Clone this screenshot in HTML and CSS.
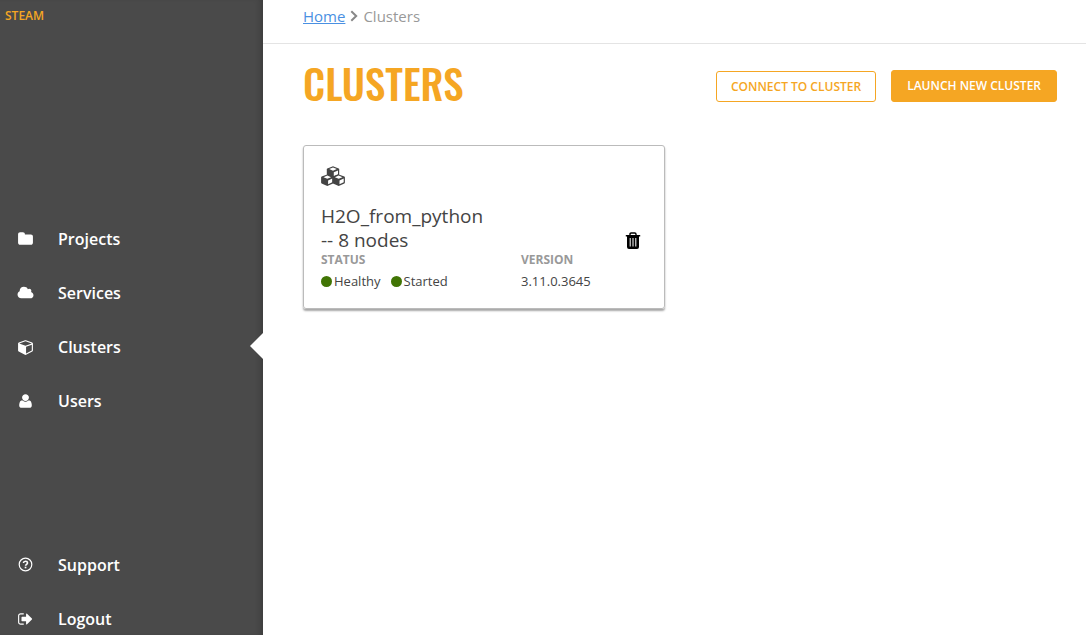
FILE: index.html
```html
<!DOCTYPE html>
<html lang="en">
<head>
<meta charset="utf-8">
<meta name="viewport" content="width=device-width, initial-scale=1">
<title>Steam - Clusters</title>
<link rel="stylesheet" href="styles.css">
</head>
<body>
<div class="app">
  <aside class="sidebar">
    <a class="brand" href="#">STEAM</a>
    <nav class="menu menu-main" aria-label="Main">
      <a class="menu-item" href="#"><svg class="menu-icon" viewBox="0 0 1792 1792"><path d="M1728 608v704q0 92-66 158t-158 66h-1216q-92 0-158-66t-66-158v-960q0-92 66-158t158-66h320q92 0 158 66t66 158v32h672q92 0 158 66t66 158z"/></svg>Projects</a>
      <a class="menu-item" href="#"><svg class="menu-icon" viewBox="0 0 2048 1792"><path d="M1984 1152q0 159-112.500 271.500t-271.500 112.500h-1088q-185 0-316.500-131.500t-131.500-316.500q0-132 71-241.500t187-163.500q-2-28-2-43 0-212 150-362t362-150q158 0 286.500 88t187.500 230q70-62 166-62 106 0 181 75t75 181q0 75-41 138 129 30 213 134.500t84 239.500z"/></svg>Services</a>
      <a class="menu-item active" href="#" aria-current="page"><svg class="menu-icon" viewBox="-64 0 1792 1792"><path d="M896 1629l640-349v-636l-640 233v752zm-64-865l698-254-698-254-698 254zm832-252v768q0 35-18 65t-49 47l-704 384q-28 16-61 16t-61-16l-704-384q-31-17-49-47t-18-65v-768q0-40 23-73t61-47l704-256q22-8 44-8t44 8l704 256q38 14 61 47t23 73z"/></svg>Clusters</a>
      <a class="menu-item" href="#"><svg class="menu-icon" viewBox="0 0 1792 1792"><path d="M1600 1405q0 120-73 189.500t-194 69.500h-874q-121 0-194-69.500t-73-189.500q0-53 3.500-103.500t14-109 26.500-108.500 43-97.500 62-81 85.500-53.500 111.500-20q9 0 42 21.500t74.500 48 108 48 133.500 21.500 133.500-21.500 108-48 74.500-48 42-21.500q61 0 111.500 20t85.500 53.500 62 81 43 97.500 26.500 108.500 14 109 3.500 103.500zm-320-893q0 159-112.500 271.500t-271.500 112.500-271.500-112.500-112.500-271.500 112.500-271.500 271.500-112.500 271.500 112.500 112.500 271.500z"/></svg>Users</a>
    </nav>
    <nav class="menu menu-account" aria-label="Account">
      <a class="menu-item" href="#"><svg class="menu-icon" viewBox="0 0 16 16"><circle cx="8" cy="7.500" r="6.300" fill="none" stroke="currentColor" stroke-width="1.200"/><path d="M5.900 6C6.100 3.800 9.900 3.700 10 5.900C10 7.200 8.100 7.400 8.100 8.800" fill="none" stroke="currentColor" stroke-width="1.600"/><path d="M7.200 9.700h1.700v1.600H7.200z"/></svg>Support</a>
      <a class="menu-item" href="#"><svg class="menu-icon" viewBox="0 0 1792 1792"><path d="M704 1440q0 4 1 20t.5 26.500-3 23.500-10 19.500-20.500 6.500h-320q-119 0-203.500-84.500t-84.500-203.500v-704q0-119 84.500-203.500t203.500-84.500h320q13 0 22.500 9.500t9.500 22.500q0 4 1 20t.5 26.500-3 23.500-10 19.500-20.500 6.500h-320q-66 0-113 47t-47 113v704q0 66 47 113t113 47h312l11.500 1 11.500 3 8 5.500 7 9 2 13.500zm928-544q0 26-19 45l-544 544q-19 19-45 19t-45-19-19-45v-288h-448q-26 0-45-19t-19-45v-384q0-26 19-45t45-19h448v-288q0-26 19-45t45-19 45 19l544 544q19 19 19 45z"/></svg>Logout</a>
    </nav>
  </aside>
  <main class="content">
    <nav class="breadcrumbs" aria-label="Breadcrumb">
      <a class="crumb-link" href="#">Home</a>
      <svg class="crumb-arrow" viewBox="0 0 8 12"><path d="M1.300 1.200L6.200 6l-4.900 4.800"/></svg>
      <span>Clusters</span>
    </nav>
    <header class="page-header">
      <h1 class="page-title">CLUSTERS</h1>
      <div class="actions">
        <button class="button button-outline" type="button">CONNECT TO CLUSTER</button>
        <button class="button button-solid" type="button">LAUNCH NEW CLUSTER</button>
      </div>
    </header>
    <article class="card">
      <svg class="cubes" viewBox="0 0 24 20">
        <defs>
          <g id="cube"><path class="cube-body" d="M6.300 .3L12 2.500Q12.500 2.800 12.500 3.400V8.400Q12.500 9 12 9.300L6.300 11.800L.6 9.300Q.1 9 .1 8.400V3.400Q.1 2.800 .6 2.500z"/><path class="cube-face" d="M6.300 1.500L10.100 3.100L6.300 4.700L2.500 3.100zM7.100 6.300L11.300 4.500V8.200L7.100 10.100z"/></g>
        </defs>
        <use href="#cube" x="5.700" y="0"/><use href="#cube" x="0" y="8.100"/><use href="#cube" x="11.400" y="8.100"/>
      </svg>
      <div class="card-main">
        <h2 class="cluster-name">H2O_from_python<br>-- 8 nodes</h2>
        <button class="delete" type="button" aria-label="Delete cluster"><svg class="trash" viewBox="0 0 16 18"><path d="M5 3V2.200Q5 1 6.200 1H9.800Q11 1 11 2.200V3" fill="none" stroke="currentColor" stroke-width="1.400"/><path d="M.8 3H15.200V4.500H14V15Q14 17 12 17H4Q2 17 2 15V4.500H.8z"/><path d="M5.200 6v8.500M8 6v8.500M10.800 6v8.500" stroke="#fff" stroke-width="1"/></svg></button>
      </div>
      <dl class="facts">
        <div><dt>STATUS</dt><dd class="statuses"><span class="status">Healthy</span><span class="status">Started</span></dd></div>
        <div><dt>VERSION</dt><dd>3.11.0.3645</dd></div>
      </dl>
    </article>
  </main>
</div>
</body>
</html>
```
FILE: styles.css
```css
* { box-sizing: border-box; }
body {
  margin: 0;
  background: #fff;
  color: #444;
  font-family: "Open Sans", sans-serif;
}
.app { display: flex; min-height: 100vh; }
.sidebar {
  display: flex;
  flex-direction: column;
  flex: 0 0 263px;
  padding-bottom: 5px;
  background: #4a4a4a;
  box-shadow: inset -6px 0 6px -4px rgba(0, 0, 0, 0.2);
}
.brand {
  padding: 8px 5px;
  color: #f5a623;
  font-size: 12px;
  font-weight: 600;
  line-height: 16px;
  text-decoration: none;
}
.menu { display: flex; flex-direction: column; gap: 32px; }
.menu-main { margin-top: 196px; }
.menu-account { margin-top: auto; }
.menu-item {
  position: relative;
  display: flex;
  align-items: center;
  gap: 24px;
  padding-left: 17px;
  color: #fff;
  font-size: 16px;
  font-weight: 600;
  line-height: 22px;
  text-decoration: none;
}
.menu-icon { width: 17px; height: 16px; fill: currentColor; }
.active::after {
  content: "";
  position: absolute;
  top: -3px;
  right: 0;
  border: 13px solid transparent;
  border-left: 0;
  border-right-color: #fff;
}
.content { flex: 1; min-width: 0; }
.breadcrumbs {
  display: flex;
  align-items: center;
  gap: 5px;
  padding: 5px 40px 16px;
  border-bottom: 1px solid #e4e4e4;
  color: #999;
  font-size: 15px;
  line-height: 22px;
}
.crumb-link { color: #4a90e2; }
.crumb-arrow { width: 8px; height: 12px; fill: none; stroke: #888; stroke-width: 2; }
.page-header {
  display: flex;
  align-items: center;
  justify-content: space-between;
  padding: 7px 29px 30px 40px;
}
.page-title {
  margin: 0;
  color: #f5a623;
  font-family: Oswald, "Roboto Condensed", "Liberation Sans Narrow", sans-serif;
  font-size: 41px;
  font-weight: 500;
  line-height: 64px;
}
.actions { display: flex; align-items: flex-end; gap: 15px; padding-top: 6px; }
.button {
  border: 1px solid #f5a623;
  border-radius: 3px;
  font-family: inherit;
  font-size: 12px;
  font-weight: 600;
  line-height: 16px;
}
.button-outline { padding: 7px 14px 6px; background: #fff; color: #f5a623; }
.button-solid { padding: 7px 15px; background: #f5a623; color: #fff; }
.card {
  width: 362px;
  max-width: calc(100% - 80px);
  margin-left: 40px;
  padding: 20px 17px 18px;
  border: 1px solid #bbb;
  border-radius: 3px;
  box-shadow: 0 2px 2px rgba(0, 0, 0, 0.35);
}
.cubes { display: block; width: 24px; height: 20px; }
.cube-body { fill: #444; }
.cube-face { fill: #fff; }
.card-main { display: flex; justify-content: space-between; align-items: flex-end; margin-top: 18px; }
.cluster-name { margin: 0; font-size: 19px; font-weight: 400; line-height: 24px; }
.delete { margin-right: 6px; padding: 2px 0; border: 0; background: none; color: #000; }
.trash { display: block; width: 16px; height: 18px; fill: currentColor; }
.facts { display: grid; grid-template-columns: 200px 1fr; margin: 0; font-size: 13px; }
.facts dt { color: #999; font-size: 12px; font-weight: 700; line-height: 16px; }
.facts dd { margin: 4px 0 0; line-height: 18px; }
.statuses { display: flex; gap: 10px; }
.status { display: flex; align-items: center; gap: 2px; }
.status::before { content: ""; width: 11px; height: 11px; border-radius: 50%; background: #417505; }
```
